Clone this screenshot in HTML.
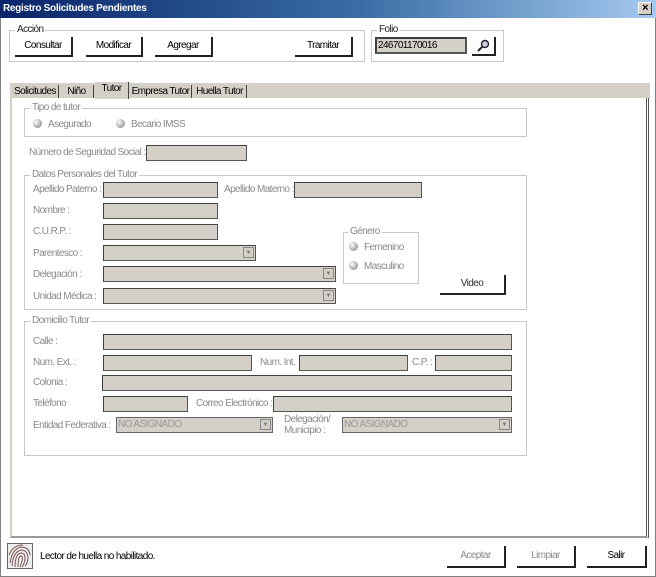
<!DOCTYPE html>
<html><head><meta charset="utf-8"><style>
*{margin:0;padding:0;box-sizing:border-box}
body{width:656px;height:577px;background:#fff;font-family:"Liberation Sans",sans-serif;font-size:10px;letter-spacing:-0.6px;color:#000;position:relative;overflow:hidden}
.frame{position:absolute;left:0;top:0;width:656px;height:577px;border:1px solid #808080}
.a{position:absolute;white-space:nowrap}
.t{position:absolute;white-space:nowrap;color:#8a8a8a;font-size:10px}
.in{position:absolute;background:#d4d0c8;border:1px solid #404040;border-right-color:#555;border-bottom-color:#555}
.btn{position:absolute;background:#fff;border-right:2px solid #222;border-bottom:2px solid #222;text-align:center;font-size:10px}
.grp{position:absolute;border:1px solid #c8c8c8}
.lg{position:absolute;background:#fff;padding:0 2px;font-size:10px;top:-7px;left:5px;color:#222}
.lgg{color:#8a8a8a}
.dd{position:absolute;right:1px;top:1px;width:11px;height:11px;background:#d4d0c8;border:1px solid #888;font-size:6px;text-align:center;line-height:10px;color:#777;letter-spacing:0}
.rad{position:absolute;width:9px;height:9px;border-radius:50%;background:radial-gradient(circle at 35% 35%,#fff,#aaa 60%,#888)}
.tab{position:absolute;top:85px;height:13px;font-size:10px;border-right:1px solid #444;line-height:13px;text-align:center}
</style></head><body>
<div class="frame"></div>
<div class="a" style="left:0;top:0;width:656px;height:18px;background:linear-gradient(90deg,#0a246a,#3a6ea5 55%,#a6caf0);color:#fff;font-weight:bold;font-size:10px;line-height:18px;padding-left:3px;letter-spacing:-0.3px">Registro Solicitudes Pendientes</div>
<div class="a" style="left:638px;top:2px;width:14px;height:13px;background:#d4d0c8;border:1px solid #fff;border-right-color:#404040;border-bottom-color:#404040;font-size:11px;line-height:10px;text-align:center;font-weight:bold">×</div>

<div class="grp" style="left:9px;top:30px;width:356px;height:32px"><span class="lg">Acción</span></div>
<div class="btn" style="left:15px;top:37px;width:58px;height:20px;line-height:18px">Consultar</div>
<div class="btn" style="left:86px;top:37px;width:57px;height:20px;line-height:18px">Modificar</div>
<div class="btn" style="left:155px;top:37px;width:58px;height:20px;line-height:18px">Agregar</div>
<div class="btn" style="left:295px;top:37px;width:58px;height:20px;line-height:18px">Tramitar</div>

<div class="grp" style="left:371px;top:30px;width:133px;height:32px"><span class="lg">Folio</span></div>
<div class="in" style="left:375px;top:37px;width:92px;height:17px;border-width:2px;font-size:10px;line-height:13px;padding-left:1px">246701170016</div>
<div class="btn" style="left:472px;top:37px;width:24px;height:19px"><svg width="16" height="14" viewBox="0 0 16 14" style="margin-top:2px"><circle cx="10" cy="5" r="3.5" fill="#ccd" stroke="#223" stroke-width="1.4"/><path d="M7.5 7.5 L3 12" stroke="#223" stroke-width="2"/></svg></div>

<div class="a" style="left:10px;top:83px;width:640px;height:15px;background:#d4d0c8"></div>
<div class="tab" style="left:12px;width:47px">Solicitudes</div>
<div class="tab" style="left:60px;width:34px">Niño</div>
<div class="a" style="left:95px;top:82px;width:34px;height:17px;background:#d4d0c8;border-right:1px solid #444;font-size:10px;text-align:center;line-height:13px">Tutor</div>
<div class="tab" style="left:130px;width:62px">Empresa Tutor</div>
<div class="tab" style="left:193px;width:54px">Huella Tutor</div>
<div class="a" style="left:10px;top:98px;width:639px;height:440px;border-left:2px solid #d4d0c8;border-bottom:2px solid #999;border-right:3px double #555"></div>

<div class="grp" style="left:24px;top:108px;width:503px;height:29px"><span class="lg lgg">Tipo de tutor</span></div>
<div class="rad" style="left:33px;top:119px"></div><div class="t" style="left:48px;top:119px">Asegurado</div>
<div class="rad" style="left:116px;top:119px"></div><div class="t" style="left:131px;top:119px">Becario IMSS</div>

<div class="t" style="left:29px;top:147px">Número de Seguridad Social :</div>
<div class="in" style="left:146px;top:145px;width:101px;height:16px"></div>

<div class="grp" style="left:24px;top:175px;width:503px;height:135px"><span class="lg lgg">Datos Personales del Tutor</span></div>
<div class="t" style="left:33px;top:184px">Apellido Paterno :</div>
<div class="in" style="left:103px;top:182px;width:115px;height:16px"></div>
<div class="t" style="left:224px;top:184px">Apellido Materno :</div>
<div class="in" style="left:294px;top:182px;width:128px;height:16px"></div>
<div class="t" style="left:33px;top:205px">Nombre :</div>
<div class="in" style="left:103px;top:203px;width:115px;height:16px"></div>
<div class="t" style="left:33px;top:226px">C.U.R.P. :</div>
<div class="in" style="left:103px;top:224px;width:115px;height:16px"></div>
<div class="t" style="left:33px;top:248px">Parentesco :</div>
<div class="in" style="left:103px;top:245px;width:153px;height:16px"><div class="dd">▼</div></div>
<div class="t" style="left:33px;top:269px">Delegación :</div>
<div class="in" style="left:103px;top:266px;width:233px;height:16px"><div class="dd">▼</div></div>
<div class="t" style="left:33px;top:291px">Unidad Médica :</div>
<div class="in" style="left:103px;top:288px;width:233px;height:16px"><div class="dd">▼</div></div>

<div class="grp" style="left:343px;top:232px;width:76px;height:52px"><span class="lg lgg" style="left:4px">Género</span></div>
<div class="rad" style="left:349px;top:242px"></div><div class="t" style="left:364px;top:242px">Femenino</div>
<div class="rad" style="left:349px;top:261px"></div><div class="t" style="left:364px;top:261px">Masculino</div>
<div class="btn" style="left:440px;top:275px;width:66px;height:20px;line-height:18px;color:#333">Video</div>

<div class="grp" style="left:24px;top:321px;width:503px;height:135px"><span class="lg lgg">Domicilio Tutor</span></div>
<div class="t" style="left:33px;top:336px">Calle :</div>
<div class="in" style="left:103px;top:334px;width:409px;height:16px"></div>
<div class="t" style="left:33px;top:357px">Num. Ext. :</div>
<div class="in" style="left:103px;top:355px;width:149px;height:16px"></div>
<div class="t" style="left:260px;top:357px">Num. Int.</div>
<div class="in" style="left:299px;top:355px;width:109px;height:16px"></div>
<div class="t" style="left:412px;top:357px">C.P. :</div>
<div class="in" style="left:435px;top:355px;width:77px;height:16px"></div>
<div class="t" style="left:33px;top:377px">Colonia :</div>
<div class="in" style="left:102px;top:375px;width:410px;height:16px"></div>
<div class="t" style="left:33px;top:398px">Teléfono</div>
<div class="in" style="left:103px;top:396px;width:85px;height:16px"></div>
<div class="t" style="left:196px;top:398px">Correo Electrónico :</div>
<div class="in" style="left:273px;top:396px;width:239px;height:16px"></div>
<div class="t" style="left:33px;top:420px">Entidad Federativa :</div>
<div class="in" style="left:116px;top:417px;width:157px;height:16px;border-color:#666;color:#999;font-size:10px;line-height:14px;padding-left:1px">NO ASIGNADO<div class="dd">▼</div></div>
<div class="t" style="left:284px;top:414px;line-height:11px">Delegación/<br>Municipio :</div>
<div class="in" style="left:342px;top:417px;width:170px;height:16px;border-color:#666;color:#999;font-size:10px;line-height:14px;padding-left:1px">NO ASIGNADO<div class="dd">▼</div></div>

<svg class="a" style="left:7px;top:543px" width="26" height="26" viewBox="0 0 26 26"><rect x="0.5" y="0.5" width="25" height="25" fill="#eee" stroke="#666"/><g fill="none" stroke="#7a5555" stroke-width="1"><path d="M3 20 Q5 6 14 4 Q22 4 23 12"/><path d="M5 23 Q6 9 14 7 Q20 7 21 14 Q21 20 18 23"/><path d="M8 24 Q8 11 14 10 Q18 10 18 15 Q18 20 15 24"/><path d="M11 24 Q11 13 14 13 Q16 13 15 18 L13 24"/><path d="M2 12 Q6 2 16 2"/></g></svg>
<div class="a" style="left:40px;top:551px;font-size:10px">Lector de huella no habilitado.</div>
<div class="btn" style="left:447px;top:546px;width:59px;height:22px;line-height:20px;color:#888">Aceptar</div>
<div class="btn" style="left:517px;top:546px;width:59px;height:22px;line-height:20px;color:#888">Limpiar</div>
<div class="btn" style="left:587px;top:546px;width:60px;height:22px;line-height:20px">Salir</div>
</body></html>
